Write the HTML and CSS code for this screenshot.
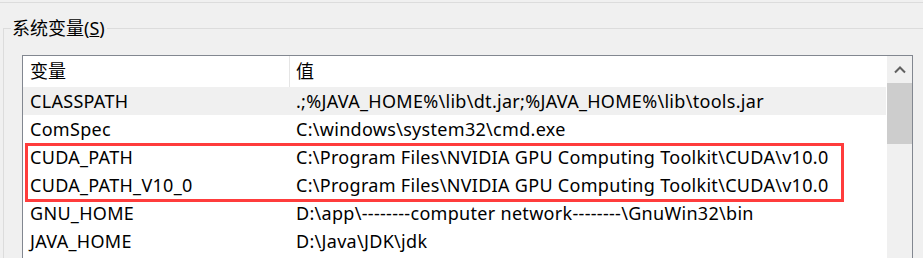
FILE: index.html
```html
<!DOCTYPE html>
<html lang="zh-CN">
<head>
    <meta charset="UTF-8">
    <meta name="viewport" content="width=device-width, initial-scale=1.0">
    <title>系统变量</title>
    <link rel="stylesheet" href="styles.css">
</head>
<body>

    <div class="top-line"></div>

    <div class="group">
        <div class="legend">系统变量(<u>S</u>)</div>

        <div class="listbox">
            <div class="table">
                <div class="row head">
                    <div class="cell first">变量</div>
                    <div class="cell">值</div>
                </div>
                <div class="row hover">
                    <div class="cell first">CLASSPATH</div>
                    <div class="cell">.;%JAVA_HOME%\lib\dt.jar;%JAVA_HOME%\lib\tools.jar</div>
                </div>
                <div class="row">
                    <div class="cell first">ComSpec</div>
                    <div class="cell">C:\windows\system32\cmd.exe</div>
                </div>
                <div class="row">
                    <div class="cell first">CUDA_PATH</div>
                    <div class="cell">C:\Program Files\NVIDIA GPU Computing Toolkit\CUDA\v10.0</div>
                </div>
                <div class="row">
                    <div class="cell first">CUDA_PATH_V10_0</div>
                    <div class="cell">C:\Program Files\NVIDIA GPU Computing Toolkit\CUDA\v10.0</div>
                </div>
                <div class="row">
                    <div class="cell first">GNU_HOME</div>
                    <div class="cell">D:\app\--------computer network--------\GnuWin32\bin</div>
                </div>
                <div class="row">
                    <div class="cell first">JAVA_HOME</div>
                    <div class="cell">D:\Java\JDK\jdk</div>
                </div>

                <!-- 红框标注 CUDA 两行 -->
                <div class="mark"></div>
            </div>

            <div class="scrollbar">
                <div class="scroll-up">
                    <svg width="12" height="8" viewBox="0 0 12 8">
                        <path d="M1 6.5 L6 1.5 L11 6.5" fill="none" stroke="#606060" stroke-width="2"/>
                    </svg>
                </div>
                <div class="thumb"></div>
            </div>
        </div>
    </div>

</body>
</html>
```

FILE: styles.css
```css
body {
    margin: 0;
    background-color: #f0f0f0;
    font-family: "Noto Sans", "Noto Sans CJK SC", sans-serif;
    font-size: 18px;
    color: #000;
    overflow: hidden;
    height: 258px;
}
.top-line {
    margin-top: 2px;
    height: 1px;
    background-color: #dcdcdc;
}
.group {
    margin: 25px 0 0 3px;
    border-top: 1px solid #dcdcdc;
    border-left: 1px solid #dcdcdc;
    padding-left: 18px;
}
.legend {
    width: max-content;
    margin: -13px 0 0 -11px;
    padding: 0 2px 0 1px;
    line-height: 24px;
    font-size: 18px;
    background-color: #f0f0f0;
}
.listbox {
    margin-top: 15px;
    width: 891px;
    height: 203px;
    box-sizing: border-box;
    border: 1px solid #828790;
    border-bottom: none;
    background-color: #fff;
    display: flex;
    overflow: hidden;
}
.table {
    position: relative;
    width: 863px;
}
.row {
    display: grid;
    grid-template-columns: 267px 1fr;
    height: 28px;
    line-height: 28px;
    white-space: nowrap;
    letter-spacing: 0.3px;
}
.row.head {
    height: 31px;
    line-height: 31px;
    letter-spacing: 0;
}
.row.head .first {
    border-right: 1px solid #e5e5e5;
}
.row.hover {
    background-color: #f0f0f0;
}
.cell {
    padding-left: 6px;
}
.cell.first {
    padding-left: 7px;
}
.mark {
    position: absolute;
    left: 2px;
    top: 87px;
    width: 819px;
    height: 59px;
    box-sizing: border-box;
    border: 3px solid #ff3c3c;
}
.scrollbar {
    width: 25px;
    margin-left: 1px;
    background-color: #f0f0f0;
}
.scroll-up {
    height: 27px;
    display: flex;
    align-items: center;
    justify-content: center;
}
.thumb {
    height: 61px;
    background-color: #cdcdcd;
}
```
